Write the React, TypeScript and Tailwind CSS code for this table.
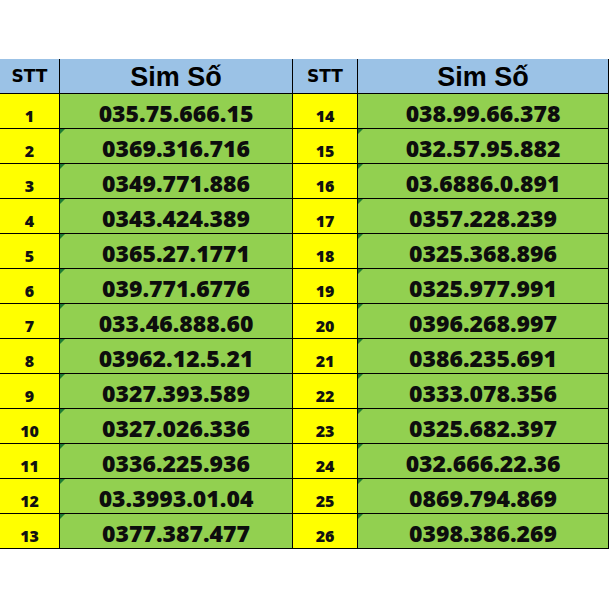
const left = [
  "035.75.666.15",
  "0369.316.716",
  "0349.771.886",
  "0343.424.389",
  "0365.27.1771",
  "039.771.6776",
  "033.46.888.60",
  "03962.12.5.21",
  "0327.393.589",
  "0327.026.336",
  "0336.225.936",
  "03.3993.01.04",
  "0377.387.477",
];

const right = [
  "038.99.66.378",
  "032.57.95.882",
  "03.6886.0.891",
  "0357.228.239",
  "0325.368.896",
  "0325.977.991",
  "0396.268.997",
  "0386.235.691",
  "0333.078.356",
  "0325.682.397",
  "032.666.22.36",
  "0869.794.869",
  "0398.386.269",
];

function Flag() {
  // excel "number stored as text" corner marker
  return (
    <span className="absolute left-0 top-0 h-0 w-0 border-t-[5px] border-r-[5px] border-t-[#1e7b34] border-r-transparent" />
  );
}

function SttCell({ n }: { n: number }) {
  return (
    <div className="flex h-[35px] items-end justify-center border-r border-b border-black bg-[#ffff00] pb-[4px] font-['Open_Sans',sans-serif] text-[16px] leading-none font-extrabold text-[#111]">
      {n}
    </div>
  );
}

function SimCell({ value, flag }: { value: string; flag: boolean }) {
  return (
    <div className="relative flex h-[35px] items-end justify-center border-r border-b border-black bg-[#92d050] pb-[3px] font-['Open_Sans',sans-serif] text-[23px] leading-none font-extrabold text-[#0d0d0d]">
      {flag && <Flag />}
      {value}
    </div>
  );
}

export default function App() {
  return (
    <div className="min-h-[609px] w-[609px] bg-white pt-[59px]">
      <div className="grid grid-cols-[60px_233px_65px_251px]">
        <div className="flex h-[35px] items-center justify-center border-r border-b border-black bg-[#9bc2e6] pt-[1px] font-['DejaVu_Sans',sans-serif] text-[17px] leading-none font-bold text-black">
          STT
        </div>
        <div className="flex h-[35px] items-end justify-center border-r border-b border-black bg-[#9bc2e6] pb-[2px] font-['Liberation_Sans',Arial,sans-serif] text-[27px] leading-none font-bold text-black">
          Sim Số
        </div>
        <div className="flex h-[35px] items-center justify-center border-r border-b border-black bg-[#9bc2e6] pt-[1px] font-['DejaVu_Sans',sans-serif] text-[17px] leading-none font-bold text-black">
          STT
        </div>
        <div className="flex h-[35px] items-end justify-center border-r border-b border-black bg-[#9bc2e6] pb-[2px] font-['Liberation_Sans',Arial,sans-serif] text-[27px] leading-none font-bold text-black">
          Sim Số
        </div>
        {left.map((v, i) => (
          <div key={v} className="contents">
            <SttCell n={i + 1} />
            <SimCell value={v} flag={i > 0} />
            <SttCell n={i + 14} />
            <SimCell value={right[i]} flag={i > 0} />
          </div>
        ))}
      </div>
    </div>
  );
}
